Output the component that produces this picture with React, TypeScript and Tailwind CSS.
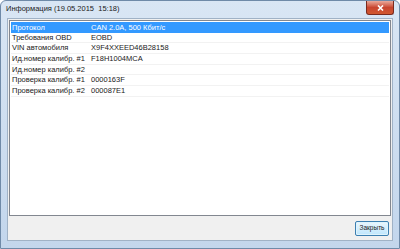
import React from 'react';

const rows: [string, string][] = [
    ['Протокол', 'CAN 2.0A, 500 Кбит/с'],
    ['Требования OBD', 'EOBD'],
    ['VIN автомобиля', 'X9F4XXEED46B28158'],
    ['Ид.номер калибр. #1', 'F18H1004MCA'],
    ['Ид.номер калибр. #2', ''],
    ['Проверка калибр. #1', '0000163F'],
    ['Проверка калибр. #2', '000087E1'],
];

export default function App() {
    return (
        <div
            className="w-[400px] h-[249px] flex flex-col bg-gradient-to-b from-[#d9e6f4] to-[#c3d6ec] border border-[#6f8aa8] rounded-t-[6px] overflow-hidden"
            style={{fontFamily: '"Liberation Sans", Arial, sans-serif'}}
        >
            {/* title bar */}
            <div className="h-[17px] flex items-start justify-between shrink-0">
                <span className="pl-[5px] pt-[4px] text-[7.5px] leading-none text-[#1a1a1a]">
                    Информация (19.05.2015&nbsp;&nbsp;15:18)
                </span>
                <div className="mr-[5px] w-[28px] h-[14px] rounded-b-[3px] border border-t-0 border-[#7a2a1e] bg-gradient-to-b from-[#e9a99b] via-[#c8452f] to-[#d2582f] flex items-center justify-center">
                    <svg width="7" height="6" viewBox="0 0 7 6">
                        <path d="M1 0.5 L6 5.5 M6 0.5 L1 5.5" stroke="#fff" strokeWidth="1.6"/>
                    </svg>
                </div>
            </div>

            {/* client area */}
            <div className="flex-1 mx-[6px] mb-[7px] bg-[#f0f0f0] border border-[#a0b2c6] flex flex-col">
                <div className="mx-[1px] mt-[1px] h-[196px] bg-white border border-[#828790] pt-[1px] px-[1px]">
                    {rows.map(([name, value], i) => (
                        <div
                            key={name}
                            className={
                                i === 0
                                    ? 'h-[10.67px] flex items-center bg-[#3399ff] text-white text-[7.5px] leading-none'
                                    : 'h-[10.67px] flex items-center border-b border-[#f2f2f2] text-[#1a1a1a] text-[7.5px] leading-none'
                            }
                        >
                            <span className="w-[80px] pl-[1px] whitespace-nowrap">{name}</span>
                            <span className="whitespace-nowrap">{value}</span>
                        </div>
                    ))}
                </div>
                <div className="flex-1 flex items-center justify-end pr-[3px]">
                    <button className="w-[34px] h-[15px] rounded-[2px] border border-[#3c7fb1] bg-gradient-to-b from-[#eaf6fd] to-[#bee6fd] text-[6.5px] leading-none text-[#1a1a1a] shadow-[inset_0_0_0_1px_#def3fc]">
                        Закрыть
                    </button>
                </div>
            </div>
        </div>
    );
}
